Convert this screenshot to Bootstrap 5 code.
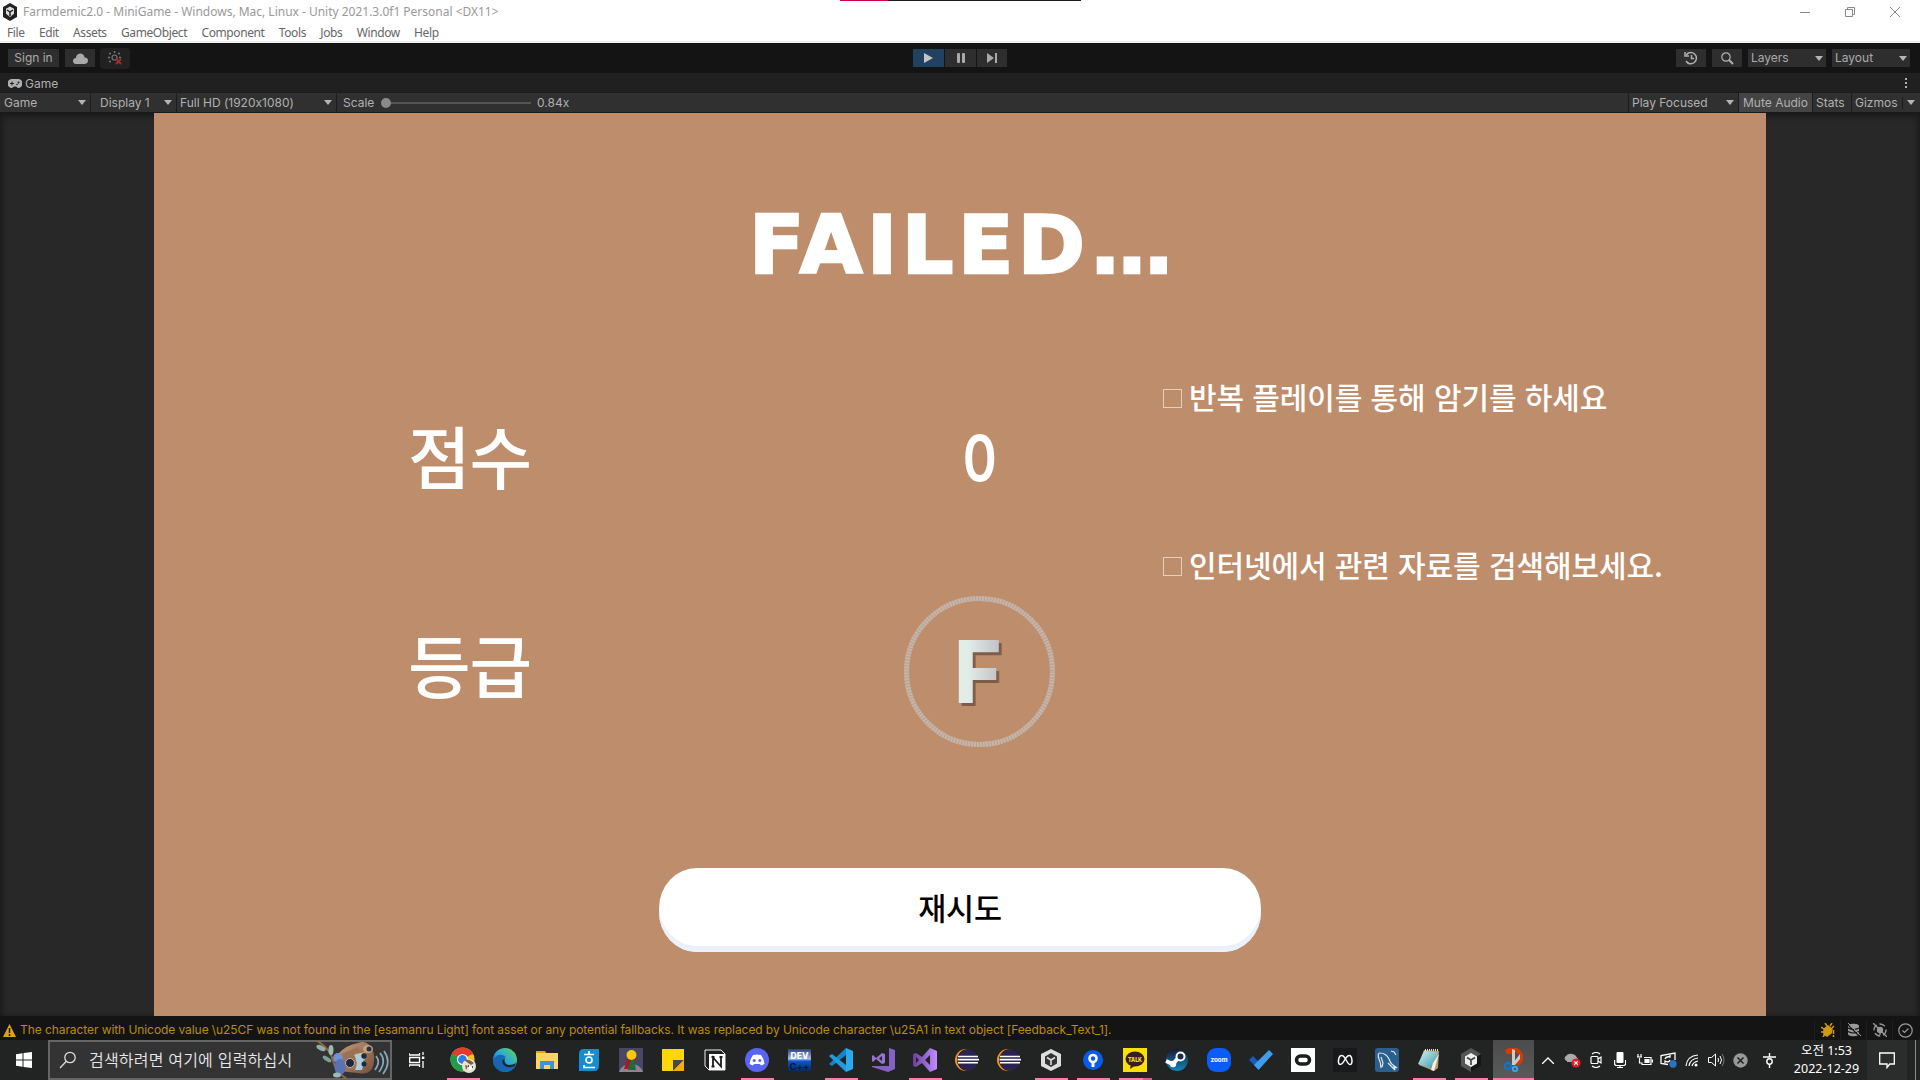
<!DOCTYPE html>
<html lang="ko">
<head>
<meta charset="utf-8">
<title>Farmdemic2.0 - MiniGame</title>
<link href="https://cdn.jsdelivr.net/npm/bootstrap@5.3.0/dist/css/bootstrap.min.css" rel="stylesheet">
<style>
body{width:1920px;height:1080px;overflow:hidden;background:#141414;font:12px/1 Inter,"Noto Sans CJK KR",sans-serif;font-feature-settings:"calt" 0;color:#b0b0b0}
svg{display:block;flex:none}
.win-head{height:43px;background:#fff;border-bottom:2px solid #eff0f0;font-family:"Noto Sans","Noto Sans CJK KR",sans-serif;position:relative}
.win-title{height:23px;color:#999;padding-left:3px;gap:6px}
.win-title span{letter-spacing:-.01px;white-space:nowrap}
.win-ctl{gap:35px;padding-right:20px}
.menus{height:19px;padding-left:7px;color:#666;gap:14.3px;letter-spacing:-.4px}
.progress-strip{position:absolute;top:0;left:840px;width:241px;height:1px;background:linear-gradient(90deg,#c8004f 48px,#1c1c1c 48px)}
.tools{height:30px;background:#141414;padding:0 10px 0 8px}
.tool{height:18px;background:#2e2e2e;display:flex;align-items:center;justify-content:center;color:#aaa}
.tool.drop{width:78px;justify-content:space-between;padding:0 3px}
.side{width:905px}
.play-on{background:#20415f}
.tabs{height:19px;background:#202020;padding:2px 12px 0 8px}
.gamebar{height:21px;background:#303030;border-bottom:1px solid #1a1a1a;border-top:1px solid #1c1c1c}
.cell{height:100%;display:flex;align-items:center;border-right:1px solid #1c1c1c;white-space:nowrap}
.cell.drop{justify-content:space-between}
.tri{width:0;height:0;border:4px solid transparent;border-top:5px solid #b5b5b5;border-bottom:0;flex:none}
.view{height:903px;background:#282828;box-shadow:inset 0 6px 6px -3px #191919,inset 4px 0 5px -2px #1b1b1b,inset -4px 0 5px -2px #1b1b1b;padding:0 154px}
.stage{width:1612px;height:903px;background:#be8d6c;color:#fff;font-family:"Noto Sans CJK KR",sans-serif}
.headline{height:262px;padding-top:102px;padding-left:595px}
.headline span{display:block;font:700 81px/60px "DejaVu Sans",sans-serif;letter-spacing:4.6px;-webkit-text-stroke:2.5px #fff;white-space:nowrap}
.headline i{font-style:normal;letter-spacing:-4px}
.results{height:493px}
.lab{width:420px;padding-left:254px}
.lab div{font-size:68px;font-weight:500;line-height:60px;white-space:nowrap;letter-spacing:-1px}
.val{width:588px;padding-left:330px}
.score{font:600 63px/46px Inter,sans-serif;padding-top:60px;width:151px;text-align:center}
.score span{display:inline-block;transform:scaleX(.82)}
.ring{width:151px;height:151px;margin-top:115px;position:relative}
.ring svg{position:absolute;inset:0}
.grade{font:800 87px/63px Inter,sans-serif;width:60px;text-align:center;background:linear-gradient(90deg,#e1eee8 30%,#c4c4c8 85%);-webkit-background-clip:text;background-clip:text;color:transparent;filter:drop-shadow(3px 3px 0 #7e5c47);transform:scaleX(.93);margin-right:4px}
.tip{font-size:30px;line-height:34px;font-weight:500;letter-spacing:-.1px;white-space:nowrap;gap:7px}
.box{width:19px;height:19px;border:1.5px solid #e6cfc0;margin:1px 0 0 1px}
.tip span{margin-top:-4px}
.retry{width:602px;height:84px;border:0;border-radius:38px/40px;background:#fff;box-shadow:inset 0 -6px 0 #eaf0fc;color:#000;font-size:30.5px;font-weight:500;letter-spacing:-.3px;font-family:inherit;padding:0 0 6px}
.status{height:24px;color:#b78e0b;padding:4px 2px 0 3px;background:#141414}
.status .st{width:26px;height:20px;border-left:1px solid #1e1e1e;display:flex;align-items:center;justify-content:center}
.taskbar{height:40px;background:#222423;color:#fff;font-family:"Noto Sans","Noto Sans CJK KR",sans-serif}
.taskbar>*{flex:none}
.start{width:48px}
.find{width:344px;height:40px;background:#333;border:2px solid #666;padding-left:9px;font:350 16px/1 "Noto Sans CJK KR",sans-serif;color:#e8e8e8}
.app{width:42px;height:40px;display:flex;align-items:center;justify-content:center;position:relative;flex:none}
.on::after{content:"";position:absolute;bottom:0;left:5px;width:33px;height:2px;background:#ff7bac}
.on.two::after{background:linear-gradient(90deg,#ff7bac 24px,#c5648a 24px)}
.app.now{background:linear-gradient(#4c4c4c,#5a5a5a);border-left:1px solid #222423}
.now::after{left:0;width:41px}
.tray{width:24px;height:40px;display:flex;align-items:center;justify-content:center;flex:none}
.clock{width:81px;font-size:12.5px;line-height:18.5px;text-align:center}
.bell{width:40px;height:40px;background:#2b2d2c}
</style>
</head>
<body>
<svg width="0" height="0" class="position-absolute">
<defs>
<linearGradient id="edgeA" x1="0" y1="1" x2="1" y2="0"><stop offset="0" stop-color="#0c59a4"/><stop offset=".5" stop-color="#2aa5dc"/><stop offset="1" stop-color="#5edb57"/></linearGradient>
<linearGradient id="vsA" x1="0" x2="1"><stop offset="0" stop-color="#6b3fa0"/><stop offset="1" stop-color="#c08cff"/></linearGradient>
<linearGradient id="steamA" x1="0" y1="0" x2="0" y2="1"><stop offset="0" stop-color="#131b38"/><stop offset="1" stop-color="#1387b8"/></linearGradient>
<linearGradient id="noteA" x1="0" x2="1" y2="1"><stop offset="0" stop-color="#d7f3f6"/><stop offset="1" stop-color="#2f95a8"/></linearGradient>
<linearGradient id="batA" x1="0" x2="1" y2="1"><stop offset="0" stop-color="#c59a78"/><stop offset="1" stop-color="#76503c"/></linearGradient>
<linearGradient id="devA" x1="0" y1="0" x2="0" y2="1"><stop offset="0" stop-color="#2a3b78"/><stop offset=".45" stop-color="#a9bfe8"/><stop offset=".55" stop-color="#0c56c8"/><stop offset="1" stop-color="#052a66"/></linearGradient>
<symbol id="eclipse" viewBox="0 0 24 24"><circle cx="11" cy="12" r="11" fill="#f7941e"/><circle cx="13" cy="12" r="11" fill="#222423"/><circle cx="13" cy="12" r="10.3" fill="#2c2255"/><path d="M3 8.500h20M2.500 11.600h21.500M3 14.700h20" stroke="#fff" stroke-width="1.600"/></symbol>
</defs>
</svg>

<header class="win-head">
  <div class="progress-strip"></div>
  <div class="win-title d-flex align-items-center">
    <svg width="14" height="18" viewBox="0 0 14 18"><path d="M7 0l7 4v10l-7 4-7-4V4z" fill="#222"/><path d="M7 3.500l4 2.300v5L7 14l-4-3.200v-5z" fill="#ddd"/><path d="M7 9v4M7 9L4 7M7 9l3-2" stroke="#222" stroke-width="1.500"/></svg>
    <span>Farmdemic2.0 - MiniGame - Windows, Mac, Linux - Unity 2021.3.0f1 Personal &lt;DX11&gt;</span>
    <div class="win-ctl ms-auto d-flex align-items-center">
      <svg width="10" height="10"><path d="M0 5.500h10" stroke="#888"/></svg>
      <svg width="10" height="10" fill="none" stroke="#888"><path d="M.5 2.500h7v7h-7zM2.500 2.500v-2h7v7h-2"/></svg>
      <svg width="10" height="10" stroke="#888"><path d="M0 0l10 10M10 0L0 10"/></svg>
    </div>
  </div>
  <nav class="menus d-flex align-items-center"><span>File</span><span>Edit</span><span>Assets</span><span>GameObject</span><span>Component</span><span>Tools</span><span>Jobs</span><span>Window</span><span>Help</span></nav>
</header>

<section class="tools d-flex align-items-center">
  <div class="side d-flex align-items-center">
    <div class="tool" style="width:51px">Sign in</div>
    <div class="tool" style="width:30px;margin-left:6px"><svg width="15" height="11" viewBox="0 0 15 11"><path d="M3 11a3 3 0 010-6A4.200 4.200 0 0111.500 4.500 3.200 3.200 0 0112 11z" fill="#aaa"/></svg></div>
    <div class="tool rounded-1" style="width:30px;height:21px;margin-left:5px;background:#212121"><svg width="14" height="14" fill="none"><circle cx="6.500" cy="6.500" r="2.500" stroke="#777" stroke-width="1.200"/><path d="M6.500 0v2M1 2.500h2M0 6.500h2M1 10.500h2M12 2.500h-2M13 6.500h-2" stroke="#777" stroke-width="1.500"/><path d="M8 8l5 5M13 8l-5 5" stroke="#9e2f2a" stroke-width="2"/></svg></div>
  </div>
  <div class="tool play-on" style="width:31px"><svg width="9" height="10"><path d="M0 0l9 5-9 5z" fill="#c4c4c4"/></svg></div>
  <div class="tool" style="width:31px;margin-left:1px"><svg width="8" height="10" fill="#aaa"><rect width="3" height="10" rx="1"/><rect x="5" width="3" height="10" rx="1"/></svg></div>
  <div class="tool" style="width:30px;margin-left:1px"><svg width="10" height="10" fill="#aaa"><path d="M0 0l7 5-7 5zM8 0h2v10H8z"/></svg></div>
  <div class="d-flex ms-auto" style="gap:6px">
    <div class="tool" style="width:30px"><svg width="14" height="14" fill="none" stroke="#b0b0b0" stroke-width="1.500"><path d="M2.200 4A5.600 5.600 0 112 10M7.500 4v3.500H10"/><path d="M1 1v4h4"/></svg></div>
    <div class="tool" style="width:30px"><svg width="13" height="13" fill="none" stroke="#b0b0b0"><circle cx="5" cy="5" r="4.200" stroke-width="1.200"/><path d="M8 8l4 4" stroke-width="2"/></svg></div>
    <div class="tool drop">Layers<i class="tri"></i></div>
    <div class="tool drop">Layout<i class="tri"></i></div>
  </div>
</section>

<section class="tabs d-flex align-items-center">
  <svg width="14" height="9" viewBox="0 0 14 9"><path d="M4 0h6a4.200 4.200 0 010 9L8 7.500H6L4 9a4.200 4.200 0 010-9z" fill="#b0b0b0"/><path d="M4 2.500v4M2 4.500h4" stroke="#202020"/><circle cx="10.500" cy="3.500" r="1" fill="#202020"/><circle cx="9" cy="5.500" r=".8" fill="#202020"/></svg>
  <span style="margin-left:3px">Game</span>
  <svg width="3" height="11" class="ms-auto" fill="#b0b0b0"><path d="M0 0h2v2H0zM0 4h2v2H0zM0 8h2v2H0z"/></svg>
</section>

<section class="gamebar d-flex">
  <div class="cell drop" style="width:91px;padding:0 4px">Game<i class="tri"></i></div>
  <div class="cell drop" style="width:86px;padding:0 4px 0 9px">Display 1<i class="tri"></i></div>
  <div class="cell drop" style="width:160px;padding:0 4px 0 3px">Full HD (1920x1080)<i class="tri"></i></div>
  <div class="d-flex align-items-center flex-grow-1" style="padding-left:6px">
    <span style="width:38px">Scale</span>
    <svg width="150" height="10"><path d="M5 5h145" stroke="#555" stroke-width="2"/><circle cx="5" cy="5" r="5" fill="#8a8a8a"/></svg>
    <span style="margin-left:6px">0.84x</span>
  </div>
  <div class="cell drop" style="width:111px;padding:0 4px 0 3px;border-left:1px solid #1c1c1c">Play Focused<i class="tri"></i></div>
  <div class="cell justify-content-center" style="width:74px;background:#444">Mute Audio</div>
  <div class="cell" style="width:39px;padding-left:3px">Stats</div>
  <div class="cell" style="width:68px;padding:0 5px 0 3px;border:0;justify-content:space-between">Gizmos<i style="width:1px;height:12px;background:#1c1c1c"></i><i class="tri"></i></div>
</section>

<main class="view">
  <div class="stage">
    <div class="headline"><span>FAILED<i>...</i></span></div>
    <div class="results d-flex">
      <div class="lab"><div style="padding-top:50px">점수</div><div style="padding-top:149px">등급</div></div>
      <div class="val">
        <div class="score"><span>0</span></div>
        <div class="ring d-flex align-items-center justify-content-center">
          <svg width="151" height="151"><circle cx="75.500" cy="75.500" r="73" fill="none" stroke="#c5b5aa" stroke-width="5"/><circle cx="75.500" cy="75.500" r="73" fill="none" stroke="#bd9f8c" stroke-width="5" stroke-dasharray="1 2"/></svg>
          <div class="grade">F</div>
        </div>
      </div>
      <div>
        <div class="tip d-flex align-items-center" style="margin-top:8px"><i class="box"></i><span>반복 플레이를 통해 암기를 하세요</span></div>
        <div class="tip d-flex align-items-center" style="margin-top:138px"><i class="box"></i><span>인터넷에서 관련 자료를 검색해보세요.</span></div>
      </div>
    </div>
    <button class="retry d-block mx-auto">재시도</button>
  </div>
</main>

<footer class="status d-flex align-items-center">
  <svg width="13" height="13"><path d="M6.500 0L13 13H0z" fill="#d9a514"/><path d="M6.500 4v5M6.500 10v2" stroke="#141414" stroke-width="1.500"/></svg>
  <span style="margin-left:4px;white-space:nowrap;letter-spacing:-.075px">The character with Unicode value \u25CF was not found in the [esamanru Light] font asset or any potential fallbacks. It was replaced by Unicode character \u25A1 in text object [Feedback_Text_1].</span>
  <div class="d-flex ms-auto">
    <div class="st"><svg width="14" height="14" fill="none" stroke="#d09a10" stroke-width="1.500"><path d="M7 3l4 3-1 4-4 3-3-2 0-5z" fill="#d09a10"/><path d="M6 3L4 0M9 3l2-3M3 6L0 4M3 9L0 9M4 11l-2 3M11 5l2-2M12.500 7v4M12.500 12v2"/></svg></div>
    <div class="st"><svg width="14" height="14"><path d="M1 3c0-3 11-3 11 0v8c0 3-11 3-11 0z" fill="#999"/><path d="M1 5q5.500 3 11 0M1 8.500q5.500 3 11 0M0 1l13 13" fill="none" stroke="#141414" stroke-width="1.200"/><path d="M1 0l13 13" stroke="#999"/></svg></div>
    <div class="st"><svg width="14" height="14" fill="none" stroke="#999" stroke-width="1.300"><circle cx="7" cy="7" r="6" stroke-dasharray="6 3"/><circle cx="7" cy="7" r="2.500" fill="#999"/><path d="M0 0l14 14M7 9v3"/></svg></div>
    <div class="st"><svg width="15" height="15" fill="none" stroke="#999" stroke-width="1.200"><circle cx="7.500" cy="7.500" r="6.700"/><path d="M4.500 7.500l2 2 4-4"/></svg></div>
  </div>
</footer>

<footer class="taskbar d-flex align-items-center">
  <div class="start d-flex justify-content-center"><svg width="16" height="16" fill="#fff"><path d="M0 2.300l6.500-1v6.200H0zM7.500 1.100L16 0v7.500H7.500zM0 8.500h6.500v6.200L0 13.700zM7.500 8.500H16V16l-8.500-1.100z"/></svg></div>
  <div class="find d-flex align-items-center">
    <svg width="18" height="18" fill="none" stroke="#ddd" stroke-width="1.300"><circle cx="11" cy="6.500" r="5.200"/><path d="M7.300 10.300L1 17"/></svg>
    <span style="margin:-2px 0 0 12px;width:228px;white-space:nowrap;letter-spacing:.2px">검색하려면 여기에 입력하십시</span>
    <svg width="74" height="38" viewBox="0 0 74 38">
      <path d="M22 13Q30 4 42 2q8-3 13 4 6 10 1 22-5 6-14 4L22 30z" fill="url(#batA)"/><path d="M23 14l19-8q8 13 2 23l-21-1z" fill="#9c7256"/>
      <ellipse cx="52" cy="8" rx="5" ry="4" fill="#c9a37d"/><circle cx="53" cy="8" r="2.500" fill="#24324a"/>
      <path d="M39 13l10-2v8l-9 2z" fill="#d9a352"/><path d="M38 14q5 6 1 15h7q3-9 0-17z" fill="#a9cce0"/>
      <circle cx="34" cy="22" r="4.500" fill="#1c2a40" stroke="#c7b29b"/><circle cx="48" cy="15" r="2.700" fill="#1c2a40"/><circle cx="48" cy="23" r="2.500" fill="#1c2a40"/>
      <path d="M0 -1Q15 8 17 20q3 11 15 19" fill="none" stroke="#936642" stroke-width="2"/>
      <ellipse cx="22" cy="17" rx="5" ry="5" fill="#7191d4"/><ellipse cx="24" cy="26" rx="5.500" ry="8" fill="#5972b5"/>
      <ellipse cx="5" cy="7" rx="5" ry="2.500" fill="#8fb1a7" transform="rotate(25 5 7)"/><ellipse cx="15" cy="9" rx="2.500" ry="5" fill="#9eb9b2"/><ellipse cx="11" cy="18" rx="5" ry="2" fill="#7d9f9b" transform="rotate(35 11 18)"/><ellipse cx="21" cy="34" rx="4" ry="2.500" fill="#9eb9b2"/>
      <path d="M60 15q5 6-1 14M64 12q7 8-1 19M68 10q8 11-1 23" fill="none" stroke="#88a9bc" stroke-width="1.700"/>
    </svg>
  </div>
  <div class="app" style="width:50px;padding-right:1px"><svg width="16" height="16" fill="none" stroke="#fff" stroke-width="1.300"><path d="M0 1v2h10.500V1M0 15v-2h10.500v2M.7 5.500h9.800v5H.7zM14 0v3M14 9v7"/><path d="M12.800 4.500h2.500v2.500h-2.500z" fill="#fff" stroke="none"/></svg></div>
  <div class="app on"><svg width="26" height="26" viewBox="0 0 26 26"><circle cx="12.500" cy="12.500" r="12" fill="#fbc116"/><path d="M12.500 12.500L2.100 6.500a12 12 0 0120.800 0z" fill="#e33b2e"/><path d="M2.100 6.500a12 12 0 0010.400 18l5-9-5-3z" fill="#229a4c"/><path d="M2.100 6.500h20.800" stroke="#e33b2e" stroke-width="2"/><circle cx="12.500" cy="12.500" r="5.600" fill="#fff"/><circle cx="12.500" cy="12.500" r="4.400" fill="#2d7de9"/><circle cx="19" cy="19" r="7" fill="#e8e2d5"/><path d="M14 13q5-2 10 3l-3 2-3-2zM15 18l3 1-2 4z" fill="#806040"/><path d="M18 19l5 1-3 4z" fill="#fff"/><path d="M18 19h1M22 20h1" stroke="#222" stroke-width="1.500"/></svg></div>
  <div class="app"><svg width="24" height="24" viewBox="0 0 24 24"><circle cx="12" cy="12" r="12" fill="url(#edgeA)"/><path d="M1 10Q7 4 13 9q-4 1-3 5 2 5 13 3-6 9-15 6Q0 20 0 12z" fill="#1765b5"/><path d="M12 10q-2 6 4 7 4 0 7-2l-1 3q-9 3-12-2-2-4 2-6z" fill="#222423"/></svg></div>
  <div class="app"><svg width="22" height="20" viewBox="0 0 22 20"><path d="M0 1h9l2 3H0z" fill="#e2a21b"/><path d="M0 3h22v16H0z" fill="#fbd465"/><path d="M4 19v-8h14v8h-4v-4H8v4z" fill="#3b94d9"/></svg></div>
  <div class="app"><svg width="20" height="22" viewBox="0 0 20 22"><path d="M5 0h15v16q0 6-5 6H0V5q0-5 5-5z" fill="#168dce"/><g fill="none" stroke="#fff" stroke-width="1.700"><path d="M10 2v3M5 5.500h10M5 16v2.500h10M10 18.500h6"/><circle cx="10" cy="11" r="3"/></g></svg></div>
  <div class="app"><svg width="24" height="24"><path d="M0 0h24v24H0z" fill="#484866"/><path d="M0 24q3-8 12-8t12 8z" fill="#888792"/><path d="M10 11h5l2 11H9z" fill="#15703a"/><path d="M9 9h8v3h-5L9 21H5z" fill="#a91720"/><circle cx="12.500" cy="7" r="5" fill="#f5c90d"/></svg></div>
  <div class="app"><svg width="22" height="22"><path d="M0 0h22v22H0z" fill="#ffd60a"/><path d="M11 11h11L11 22z" fill="#484848"/><path d="M22 11v11H11z" fill="#f4b000"/></svg></div>
  <div class="app"><svg width="22" height="22"><path d="M1 1h16l4 4v16H5l-4-4z" fill="#202020" stroke="#eee"/><path d="M5 5h16v16H5z" fill="#fff"/><path d="M9 17.500v-9l8 9v-9M7.500 8h3M7.500 17.500h3M15.500 8h3" fill="none" stroke="#1b1b1b" stroke-width="1.800"/></svg></div>
  <div class="app on"><svg width="24" height="24"><circle cx="12" cy="12" r="12" fill="#5865f2"/><path d="M8 7q4-1 8 0 3 4 3.500 9L16 17.500l-1-1.500H9l-1 1.500L4.500 16Q5 11 8 7z" fill="#fff"/><circle cx="9.200" cy="12.500" r="1.500" fill="#5865f2"/><circle cx="14.800" cy="12.500" r="1.500" fill="#5865f2"/></svg></div>
  <div class="app"><svg width="23" height="22" viewBox="0 0 23 22"><path d="M0 0h23v22H0z" fill="url(#devA)"/><text x="11.500" y="9.500" text-anchor="middle" textLength="18" lengthAdjust="spacingAndGlyphs" font-family="Inter" font-weight="800" font-size="9" fill="#fff">DEV</text><text x="11.500" y="20.500" text-anchor="middle" textLength="20" lengthAdjust="spacingAndGlyphs" font-family="Inter" font-weight="700" font-size="9" fill="#061838">C++</text></svg></div>
  <div class="app on"><svg width="24" height="24"><path d="M17 0l7 3v18l-7 3z" fill="#2aabf0"/><path d="M17 0v7L3 18l-3-2z" fill="#1286c8"/><path d="M0 8l3-2 14 11v7z" fill="#229bdc"/></svg></div>
  <div class="app"><svg width="24" height="24"><path d="M18 0l6 2v19l-7 3-16-5v-1h17z" fill="#8661c5"/><path d="M11 5l3 1v9l-3 1-6-5-3 3-1-1V8l1-1 3 3zM11 8l-3 2.500 3 2.500z" fill="#9772d2" fill-rule="evenodd"/></svg></div>
  <div class="app on"><svg width="24" height="24"><path d="M17 0l7 3v18l-7 3-8-9-6 4-3-1V6l3-1 6 4zM17 7l-5 5 5 5zM3 9v6l3-3z" fill="url(#vsA)" fill-rule="evenodd"/></svg></div>
  <div class="app"><svg width="24" height="24"><use href="#eclipse"/></svg></div>
  <div class="app"><svg width="24" height="24"><use href="#eclipse"/></svg></div>
  <div class="app on"><svg width="22" height="22"><path d="M11 0l10 5v12l-10 5-10-5V5z" fill="#ddd"/><path d="M11 4l6 3.500v7L11 18l-6-3.500v-7z" fill="#333"/><path d="M11 11v5M11 11L7 8.500M11 11l4-2.500" stroke="#ddd" stroke-width="1.600"/></svg></div>
  <div class="app on"><svg width="20" height="20"><circle cx="10" cy="10" r="10" fill="#0a5be8"/><circle cx="10" cy="8.500" r="3.500" fill="none" stroke="#fff" stroke-width="2.600"/><path d="M10 12v5" stroke="#fff" stroke-width="3"/></svg></div>
  <div class="app on two"><svg width="24" height="24"><path d="M0 0h24v24H0z" fill="#fae100"/><ellipse cx="12" cy="11" rx="9.500" ry="7.500" fill="#371d1e"/><path d="M8 16l-1 5 6-4z" fill="#371d1e"/><text x="12" y="13.500" text-anchor="middle" textLength="14" lengthAdjust="spacingAndGlyphs" font-family="Inter" font-weight="800" font-size="6.500" fill="#fae100">TALK</text></svg></div>
  <div class="app"><svg width="24" height="24"><circle cx="12" cy="12" r="11" fill="url(#steamA)"/><path d="M1 13l7 3 6-7" fill="none" stroke="#fff" stroke-width="4"/><circle cx="8" cy="16" r="3.200" fill="#fff"/><circle cx="15.500" cy="8.500" r="4" fill="#1b2d4d" stroke="#fff" stroke-width="2"/></svg></div>
  <div class="app"><svg width="24" height="24"><rect width="24" height="24" rx="9" fill="#0b5cff"/><text x="12" y="14" text-anchor="middle" textLength="17" lengthAdjust="spacingAndGlyphs" font-family="Inter" font-weight="700" font-size="7" fill="#fff">zoom</text></svg></div>
  <div class="app"><svg width="24" height="20"><path d="M0 10l4-4 8 8-4 4z" fill="#185abd"/><path d="M5 15L20 0l4 4L9.500 20z" fill="#3f9df0"/></svg></div>
  <div class="app"><svg width="24" height="24"><path d="M0 0h24v24H0z" fill="#fff"/><rect x="5.500" y="8" width="13" height="8" rx="4" fill="none" stroke="#1c1e20" stroke-width="3.500"/></svg></div>
  <div class="app"><svg width="24" height="24"><path d="M0 0h24v24H0z" fill="#17191a"/><path d="M6.500 16.500c-3 0-2-9 1.500-9 4 0 5 9 8.500 9 3 0 2-9-1-9-4 0-5 9-9 9" fill="none" stroke="#fff" stroke-width="1.500" transform="translate(.7 0)"/></svg></div>
  <div class="app"><svg width="24" height="24"><rect width="24" height="24" rx="3" fill="#2a5f8e"/><path d="M6 20q0-5-2-9-2-6 1-6 6 0 9 6 2 5 4 6l4 3-3-1 1 3-7-7M6 9l2 6-1 4M16 3l3 1 2 3" fill="none" stroke="#dce8f2" stroke-width="1.200"/></svg></div>
  <div class="app on"><svg width="24" height="24"><path d="M7 2l15 1-1 17-4 3-15-6z" fill="#bd9b62"/><path d="M7 3l14 1-5 17L1 16z" fill="url(#noteA)"/><path d="M16 15l6-9-5 17-3-1z" fill="#f4f0e6"/><path d="M8 2h13" stroke="#ddd" stroke-width="2" stroke-dasharray="1 1"/></svg></div>
  <div class="app on"><svg width="22" height="24"><path d="M11 0l10 6v12l-10 6-10-6V6z" fill="#555"/><path d="M21 6v12l-10 6V12z" fill="#151515"/><path d="M11 5l6 3.500v7L11 19l-6-3.500v-7z" fill="#eee"/><path d="M11 12v5M11 12L7 9.500M11 12l4-2.500" stroke="#444" stroke-width="1.700"/></svg></div>
  <div class="app on now"><svg width="22" height="24"><path d="M3 4q10-7 15 3 1 6-4 9M3 4h7" fill="none" stroke="#d83b01" stroke-width="4"/><path d="M9 1l3 1v15H9zM10 15l7-9v5l-5 6z" fill="#ccc"/><circle cx="5" cy="18" r="3" fill="none" stroke="#1473c7" stroke-width="2.500"/><circle cx="12" cy="21" r="2.200" fill="none" stroke="#2fa8f0" stroke-width="2"/></svg></div>
  <div class="tray" style="margin-left:2px"><svg width="12" height="7"><path d="M0 7l6-6 6 6" fill="none" stroke="#fff" stroke-width="1.300"/></svg></div>
  <div class="tray"><svg width="17" height="15"><path d="M3 8a4 3 0 01-1-5q3-4 9-1l3 4v3H3z" fill="#aaa"/><circle cx="12" cy="10" r="4.500" fill="#e01f2d"/><path d="M10.300 8.300l3.400 3.400M13.700 8.300l-3.400 3.400" stroke="#fff" stroke-width="1.200"/></svg></div>
  <div class="tray"><svg width="13" height="16" fill="none" stroke="#fff" stroke-width="1.200"><rect x="1" y="4.500" width="7" height="7" rx="1"/><path d="M8 7l3-2v6L8 9M2 2q4-3 8 0M2 14q4 3 8 0"/></svg></div>
  <div class="tray"><svg width="12" height="16"><rect x="2.500" width="7" height="11" rx="1" fill="#fff"/><path d="M.6 8v3.500q0 2 2 2h7q2 0 2-2V8M6 13v3M3 15.500h6" fill="none" stroke="#fff" stroke-width="1.200"/></svg></div>
  <div class="tray"><svg width="17" height="12" fill="none" stroke="#fff" stroke-width="1.200"><path d="M6 9v1.500h9v-7H8M1 3h5M2 0v3M5 0v3M3.500 4v5h3"/><path d="M9 5.500h4v3H9z" fill="#fff"/><path d="M16.400 5.500v3"/></svg></div>
  <div class="tray"><svg width="17" height="16" fill="none" stroke="#fff" stroke-width="1.300"><path d="M8 12.500l-7-1v-8L15 1v7"/><path d="M5 7q1-3 5-2V3M10 8q-1 3-5 1v2"/><circle cx="13" cy="12" r="3.700" fill="#2a72c8" stroke="none"/></svg></div>
  <div class="tray"><svg width="14" height="13" fill="none" stroke="#fff" stroke-width="1.200"><path d="M1 12Q2 2 13 1M4 12Q5 5 13 4M7 12q1-4 6-5"/><circle cx="11" cy="11" r="1.500" fill="#fff" stroke="none"/></svg></div>
  <div class="tray"><svg width="17" height="14" fill="none" stroke="#fff"><path d="M.5 4.500h3l4-3.500v12l-4-3.500h-3zM10 5q1 2 0 4M12 3q3 4 0 8"/><path d="M14 1q4 6 0 12" stroke="#777"/></svg></div>
  <div class="tray"><svg width="15" height="15"><circle cx="7.500" cy="7.500" r="7.200" fill="#999"/><path d="M4.500 4.500l6 6M10.500 4.500l-6 6" stroke="#222" stroke-width="1.600"/></svg></div>
  <div class="tray" style="width:34px"><svg width="13" height="15" fill="none" stroke="#fff" stroke-width="1.400"><path d="M6.500 0v4M0 4h13M6.500 11v4"/><circle cx="6.500" cy="8.500" r="2.700"/></svg></div>
  <div class="clock"><div>오전 1:53</div><div>2022-12-29</div></div>
  <div class="bell d-flex align-items-center justify-content-center"><svg width="16" height="17"><path d="M.7 1h14.600v11h-4.500L8 15.500V12H.7z" fill="none" stroke="#fff" stroke-width="1.300"/></svg></div>
  <div style="width:1px;height:40px;background:#8b8b8b;margin-left:8px"></div>
</footer>
<script src="https://cdn.jsdelivr.net/npm/bootstrap@5.3.0/dist/js/bootstrap.bundle.min.js"></script>
</body>
</html>
